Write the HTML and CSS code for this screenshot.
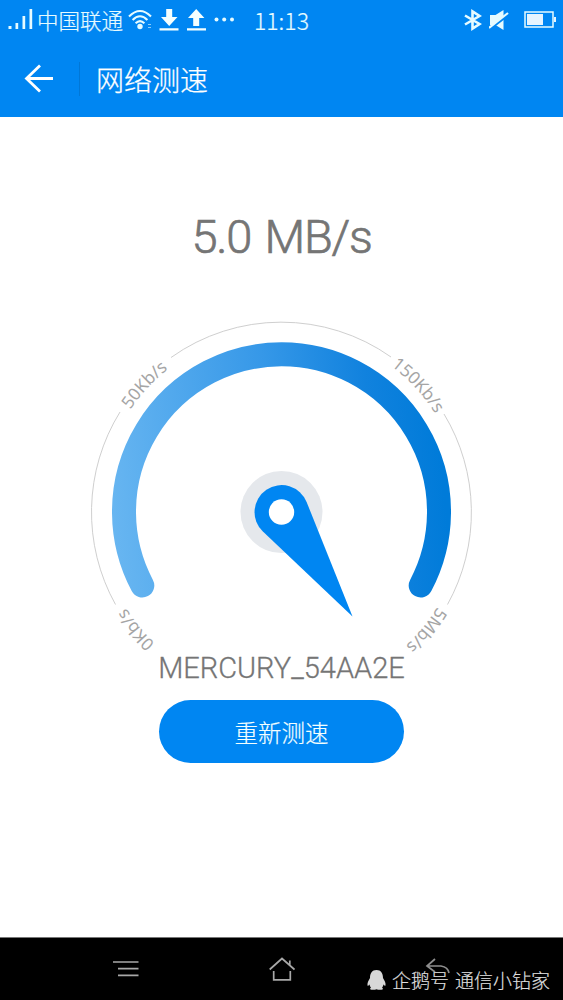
FILE: index.html
```html
<!DOCTYPE html>
<html lang="zh-CN">
<head>
<meta charset="utf-8">
<title>网络测速</title>
<link rel="stylesheet" href="styles.css">
</head>
<body>
<div class="screen">
  <header class="top">
    <div class="status">
      <svg class="signal" width="26" height="22" viewBox="0 0 26 22" fill="#e6fbff"><path d="M.500 17h3v3h-3zM7.500 14h2.700v6H7.500zM14.500 7h2.700v13h-2.700zM21.500 0h2.700v20h-2.700z"/></svg>
      <span class="carrier">中国联通</span>
      <svg class="wifi" width="26" height="22" viewBox="0 0 26 22" fill="none" stroke="#e6fbff" stroke-width="2.100"><path d="M1 7.500Q12 -3.500 23 7.500M4.600 11Q12 3.500 19.400 11M7.600 14.300Q12 10 16.400 14.300"/><circle cx="12" cy="17.500" r="2.700" fill="#e6fbff" stroke="none"/><path d="M20 15.500h3M20 18.500h3" stroke-width="1" opacity=".6"/></svg>
      <svg class="transfer" width="48" height="22" viewBox="0 0 48 22" fill="#f4ffff"><path d="M7.200 0h6v8h5.300L10.200 17 2 8h5.200zM.500 19.300h19v2.200H.500zM34.200 17h6V9h5.200l-8.200-9L29 9h5.200zM28 19.300h19v2.200H28z"/></svg>
      <svg class="more" width="22" height="5" viewBox="0 0 22 5" fill="#e6fbff"><circle cx="2.500" cy="2.500" r="2"/><circle cx="10.200" cy="2.500" r="2"/><circle cx="18" cy="2.500" r="2"/></svg>
      <span class="clock">11:13</span>
      <svg class="bluetooth" width="18" height="22" viewBox="0 0 18 22" fill="none" stroke="#e6fbff" stroke-width="2.600"><path d="M1 6.500l14.500 8.500-7 4.500V2.500l7 4.500L1 15.500"/></svg>
      <svg class="mute" width="20" height="22" viewBox="0 0 20 22"><path d="M1 6h5.500L14.500 1v20l-8-5H1z" fill="#e6fbff"/><path d="M0 20.700L19 6" stroke="#0086f2" stroke-width="2.500"/><path d="M0 19L19 4" stroke="#e6fbff" stroke-width="2.200"/></svg>
      <svg class="battery" width="32" height="18" viewBox="0 0 32 18"><path d="M1 1h28v15H1z" fill="none" stroke="#e6fbff" stroke-width="1.500"/><path d="M3 3h16v11H3zM30 6h2v5h-2z" fill="#e6f4ff"/></svg>
    </div>
    <div class="titlebar">
      <svg class="back" width="30" height="30" viewBox="0 0 30 30" fill="none" stroke="#fff" stroke-width="2.800"><path d="M16 1.500L2.500 14.500 16 27.500M2 14.500h27"/></svg>
      <i class="divider"></i>
      <h1 class="title">网络测速</h1>
    </div>
  </header>
  <main class="content">
    <div class="speed">5.0 MB/s</div>
    <svg class="gauge" width="401" height="350" viewBox="81 312 401 350">
      <defs>
        <linearGradient id="sweep" gradientUnits="userSpaceOnUse" x1="112" y1="535" x2="445" y2="500">
          <stop offset="0" stop-color="#68b6f1"/><stop offset=".5" stop-color="#3698e8"/><stop offset=".8" stop-color="#1182de"/><stop offset="1" stop-color="#007bd9"/>
        </linearGradient>
        <path id="scale" d="M281.500 694.500A182.500 182.500 0 0 1 281.500 329.500A182.500 182.500 0 0 1 281.500 694.500"/>
      </defs>
      <g fill="none" stroke="#cfcfcf"><path d="M115.500 604.500A190 190 0 0 1 120 412M171 357.500A190 190 0 0 1 391 357M444 414A190 190 0 0 1 447.500 604.500"/></g>
      <path d="M142.300 585.500A157.500 157.500 0 1 1 420.700 585.500" fill="none" stroke="url(#sweep)" stroke-width="24" stroke-linecap="round"/>
      <g class="marks">
        <text><textPath href="#scale" startOffset="14.200%">0Kb/s</textPath></text>
        <text><textPath href="#scale" startOffset="36.900%">50Kb/s</textPath></text>
        <text><textPath href="#scale" startOffset="63.100%">150Kb/s</textPath></text>
        <text><textPath href="#scale" startOffset="85.900%">5Mb/s</textPath></text>
      </g>
      <circle cx="281.500" cy="512" r="41" fill="#e5e8ec"/>
      <path d="M262.900 531.600A27 27 0 1 1 306.600 502L352.500 616.500z" fill="#0086f2"/>
      <circle cx="281.500" cy="512" r="12.700" fill="#fff"/>
    </svg>
    <div class="network">MERCURY_54AA2E</div>
    <button class="retry">重新测速</button>
  </main>
  <nav class="nav">
    <svg width="26" height="18" viewBox="0 0 26 18" fill="none" stroke="#a8a8a8" stroke-width="1.700"><path d="M0 2h25.500M5 8.700h20.500M5 15.300h20.500"/></svg>
    <svg width="26" height="24" viewBox="0 0 26 24" fill="none" stroke="#a8a8a8" stroke-width="1.700"><path d="M.700 12.500L13 1.500l12.500 11M20.800 8V3.500M4.700 14v8.800h16.600V14"/></svg>
    <svg width="26" height="24" viewBox="0 0 26 24" fill="none" stroke="#8e8e8e" stroke-width="1.700"><path d="M10 2L2 9l8 6M2 9h14q7 1 8 7"/></svg>
    <div class="watermark">
      <svg width="19" height="20" viewBox="0 0 19 20" fill="#d8d8d8"><path d="M9.500 0C5 0 3 3.500 3 8 1.500 10.500 0 13 .500 15.500c.500 1 1.500-.500 2-1 .300 1.500 1 2.500 1.500 3-1 .500-1.500 2 .500 2.300 2 .200 4-.200 5-.600 1 .400 3 .800 5 .600 2-.300 1.500-1.800.500-2.300.500-.500 1.200-1.500 1.500-3 .500.500 1.500 2 2 1C19 13 17.500 10.500 16 8c0-4.500-2-8-6.500-8z"/></svg>
      <span class="source">企鹅号</span><span>通信小钻家</span>
    </div>
  </nav>
</div>
</body>
</html>
```
FILE: styles.css
```css
* { box-sizing: border-box; }
body { margin: 0; }
.screen {
  width: 563px; height: 1000px;
  display: flex; flex-direction: column;
  background: #fff; overflow: hidden;
  font-family: Roboto, "Noto Sans CJK SC", sans-serif;
}
.top { height: 117px; background: #0086f2; color: #fff; }
.status { height: 40px; display: flex; align-items: center; padding: 0 7px 0 8px; color: #e6fbff; }
.status svg { flex: none; }
.carrier { font: 300 21.500px/40px "Noto Sans CJK SC", sans-serif; margin: 0 0 0 3px; width: 87px; white-space: nowrap; -webkit-text-stroke: .2px; }
.wifi { margin-left: 4px; }
.transfer { margin-left: 5px; }
.more { margin: -1px 0 0 7px; }
.clock { font: 300 23px/36px "Noto Sans CJK SC", sans-serif; margin: 0 0 0 18px; width: 56px; white-space: nowrap; -webkit-text-stroke: .2px; }
.bluetooth { margin-left: auto; }
.mute { margin-left: 7px; }
.battery { margin-left: 15px; }
.titlebar { height: 77px; display: flex; align-items: center; padding-left: 24px; }
.divider { width: 1px; height: 34px; margin-left: 25px; background: #0077d7; }
.title { margin: 0 0 0 16px; font: 300 28px/40px "Noto Sans CJK SC", sans-serif; -webkit-text-stroke: .25px; }
.content { height: 820px; display: flex; flex-direction: column; align-items: center; padding-top: 90px; }
.speed { height: 60px; font-size: 47px; line-height: 60px; font-weight: 300; letter-spacing: -1.200px; word-spacing: 3px; color: #757575; white-space: nowrap; -webkit-text-stroke: .7px; }
.gauge { flex: none; margin-top: 45px; }
.marks { font: 17.300px "Noto Sans", sans-serif; fill: #a5a5a5; text-anchor: middle; }
.network { height: 36px; margin-top: -12px; font-size: 29px; line-height: 36px; font-weight: 300; color: #757575; white-space: nowrap; -webkit-text-stroke: .3px; }
.retry {
  width: 245px; height: 63px; margin-top: 14px; padding: 0; border: 0; border-radius: 32px;
  background: #0086f2; color: #f4ffff; font: 300 23.500px/65px "Noto Sans CJK SC", sans-serif; -webkit-text-stroke: .2px;
}
.nav {
  position: relative; height: 63px; background: #000; border-top: 1px solid #777;
  display: flex; align-items: center; justify-content: space-between; padding: 0 112px 0 113px;
}
.watermark {
  position: absolute; left: 367px; top: 27px; height: 30px;
  display: flex; align-items: center; white-space: nowrap;
  color: #dedede; font: 300 19px/30px "Noto Sans CJK SC", sans-serif; -webkit-text-stroke: .2px;
}
.source { margin: 0 6px; }
```
